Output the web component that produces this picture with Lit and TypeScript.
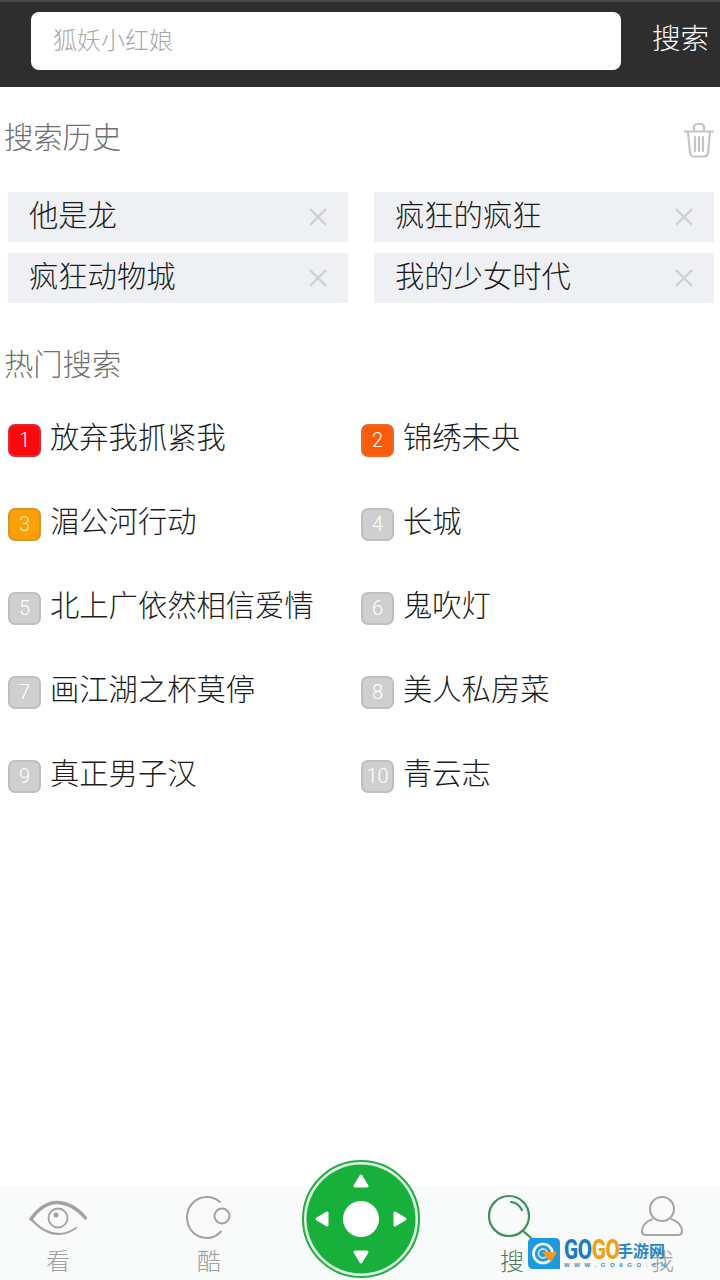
import { LitElement, html, css, svg } from "lit";
import { customElement } from "lit/decorators.js";

const history = ["他是龙", "疯狂的疯狂", "疯狂动物城", "我的少女时代"];
const hot = ["放弃我抓紧我", "锦绣未央", "湄公河行动", "长城", "北上广依然相信爱情", "鬼吹灯", "画江湖之杯莫停", "美人私房菜", "真正男子汉", "青云志"];

@customElement("app-root")
export class AppRoot extends LitElement {
  static styles = css`
    :host { display: block; width: 720px; height: 1280px; position: relative; overflow: hidden; background: #fff;
      font-family: "Noto Sans CJK SC", "Liberation Sans", sans-serif; color: #1c1c1c; font-weight: 300; }
    .top { height: 87px; box-sizing: border-box; background: #2e2e2e; border-top: 2px solid #4a4a4a; display: flex; align-items: center; padding: 0 0 8px 31px; gap: 31px; }
    .input { flex: none; width: 590px; height: 58px; background: #fff; border-radius: 8px; box-sizing: border-box; padding: 0 0 4px 22px; display: flex; align-items: center; font-size: 24px; color: #a8a8a8; }
    .go { font-size: 28.5px; color: #fff; line-height: 1; padding-bottom: 7px; white-space: nowrap; }
    .head { display: flex; justify-content: space-between; align-items: center; padding: 0 6px 0 4px; height: 44px; font-size: 29.3px; color: #707070; line-height: 40px; }
    .head span { padding-bottom: 4px; }
    .head svg { margin-top: 6px; }
    .h1 { margin-top: 28px; }
    .chips { display: grid; grid-template-columns: 340px 340px; column-gap: 26px; row-gap: 11px; padding-left: 8px; margin-top: 33px; }
    .chip { height: 50px; background: #eff0f4; display: flex; align-items: center; justify-content: space-between; padding: 0 20px 0 21px; font-size: 29.3px; line-height: 1; }
    .chip span { padding-bottom: 7px; }
    .h2 { margin-top: 39px; }
    .list { display: grid; grid-template-columns: 353px 353px; grid-auto-rows: 84px; padding-left: 8px; margin-top: 37px; }
    .item { display: flex; align-items: center; gap: 9px; height: 34px; font-size: 29.3px; line-height: 1; white-space: nowrap; }
    .item span { padding-bottom: 8px; }
    .badge { flex: none; width: 33px; height: 33px; box-sizing: border-box; border-radius: 7px; background: #cfcfcf; border: 2px solid #bfbfbf; color: #fff; font: 300 20px/29px "Roboto", "Liberation Sans", sans-serif; text-align: center; }
    .b1 { background: #f70a0e; border-color: #dc2a30; }
    .b2 { background: #fb5a0a; border-color: #e46a30; }
    .b3 { background: #fc9f08; border-color: #d8952e; color: #ffe9a8; }
    .nav { position: absolute; left: 0; right: 0; bottom: 0; height: 94px; background: #f8fbfa; display: grid; grid-template-columns: 116px 186px 118px 184px 116px; }
    .tab { display: flex; flex-direction: column; align-items: center; font-size: 24px; line-height: 30px; color: #a0a0a0; padding-top: 7px; box-sizing: border-box; }
    .tab svg { display: block; height: 50px; }
    .tab span { margin-top: 2px; }
    .tab.on { color: #4c7a5c; }
    .tab.on svg { margin-left: 10px; }
    .joy { position: absolute; left: 302px; top: 1160px; width: 118px; height: 118px; }
    .mark { position: absolute; left: 528px; top: 1238px; display: flex; gap: 4px; }
    .mark > svg { display: block; }
    .brand { display: flex; flex-direction: column; }
    .name { display: flex; height: 24px; align-items: center; white-space: nowrap; }
    .gogo { width: 53px; font: 800 28px/24px "Roboto", sans-serif; color: #1f79c4; display: inline-block; transform: scaleX(.74); transform-origin: left center; letter-spacing: -.5px; }
    .gogo i { font-style: normal; color: #f0a012; }
    .cn { font: 700 16px/24px "Noto Sans CJK SC", sans-serif; color: #2c86cc; }
    .brand small { font: 700 6px/7px "Liberation Sans", sans-serif; letter-spacing: 4.6px; color: #3f86c0; white-space: nowrap; }
  `;

  private close() {
    return html`<svg width="20" height="20" viewBox="0 0 20 20" fill="none" stroke="#cfd0d2" stroke-width="2.4"><path d="M2 2 18 18M18 2 2 18"/></svg>`;
  }

  render() {
    return html`
      <div class="top"><div class="input">狐妖小红娘</div><div class="go">搜索</div></div>
      <div class="head h1"><span>搜索历史</span>
        <svg width="30" height="36" viewBox="0 0 30 36" fill="none" stroke="#c4c6c6" stroke-width="2.2" stroke-linecap="round" stroke-linejoin="round">
          <path d="M1 9.500H29M10 9V5.500C10 3 11.500 2 13.500 2H16.500C18.500 2 20 3 20 5.500V9"/>
          <path d="M4 10 6 31C6.200 33.500 7.500 34.500 10 34.500H20C22.500 34.500 23.800 33.500 24 31L26 10"/>
          <path d="M11 15V29M15 15V29M19 15V29"/>
        </svg>
      </div>
      <div class="chips">${history.map((t) => html`<div class="chip"><span>${t}</span>${this.close()}</div>`)}</div>
      <div class="head h2"><span>热门搜索</span></div>
      <div class="list">${hot.map((t, i) => html`<div class="item"><div class="badge ${i < 3 ? `b${i + 1}` : ""}">${i + 1}</div><span>${t}</span></div>`)}</div>

      <div class="nav">
        <div class="tab"><svg width="58" height="50" viewBox="0 0 58 50" fill="none" stroke="#a2a2a2">
          <path d="M2 26C10 15 19 9 29 9.500C39 10 49 16 56.500 25" stroke-width="3.500" stroke-linecap="round"/>
          <path d="M2 26C10 35 19 41 30 41C36 41 41 39 47 35" stroke-width="2" stroke-linecap="round"/>
          <circle cx="29" cy="25" r="9.500" stroke-width="1.800"/><circle cx="27" cy="22" r="2.500" fill="#a2a2a2" stroke="none"/>
        </svg><span>看</span></div>
        <div class="tab"><svg width="48" height="50" viewBox="0 0 48 50" fill="none" stroke="#a2a2a2" stroke-width="2">
          <path d="M35 9C31 5.500 27 4 22 4C10.500 4 2 13 2 24.500C2 36 10.500 45 22 45C27 45 32 43 36 38.500" stroke-linecap="round"/>
          <circle cx="37" cy="23" r="7.500"/>
        </svg><span>酷</span></div>
        <div></div>
        <div class="tab on"><svg width="60" height="50" viewBox="0 0 60 50" fill="none" stroke="#3f8f5c" stroke-width="2.200" stroke-linecap="round">
          <circle cx="22" cy="23" r="20"/><path d="M24 9C29 9.500 33 13 35 17M36 38 50 50"/>
        </svg><span>搜</span></div>
        <div class="tab"><svg width="44" height="50" viewBox="0 0 44 50" fill="none" stroke="#a8a8a8" stroke-width="2.200">
          <circle cx="22" cy="16" r="12"/><path d="M13 26C6 28 2 33 2 38C2 41 3 42 6 42H38C41 42 42 41 42 38C42 33 38 28 31 26"/>
        </svg><span>我</span></div>
      </div>

      <svg class="joy" viewBox="0 0 118 118">
        <circle cx="59" cy="59" r="58" fill="#dff6e4" stroke="#1fae42" stroke-width="2"/>
        <circle cx="59" cy="59" r="54.500" fill="#17b03a"/>
        <circle cx="59" cy="59" r="18" fill="#fff"/>
        ${svg`<g fill="#fff" stroke="#fff" stroke-width="3" stroke-linejoin="round">
          <path d="M59 16 65 26H53Z"/><path d="M59 102 65 92H53Z"/><path d="M15 59 25 53V65Z"/><path d="M103 59 93 53V65Z"/>
        </g>`}
      </svg>

      <div class="mark">
        <svg width="32" height="31" viewBox="0 0 32 31">
          <path d="M0 5Q0 0 5 0H27Q32 0 32 5V31H5Q0 31 0 26Z" fill="#1f9ae0"/>
          <circle cx="15" cy="15.500" r="9.500" fill="none" stroke="#fff" stroke-width="2.600"/>
          <circle cx="15" cy="15.500" r="4.500" fill="none" stroke="#bfe4f8" stroke-width="1.800"/>
          <path d="M14 14H29L23 24Z" fill="#f29a1c"/>
        </svg>
        <div class="brand">
          <div class="name"><span class="gogo">GO<i>GO</i></span><span class="cn">手游网</span></div>
          <small>WWW.GO9GO.CN</small>
        </div>
      </div>
    `;
  }
}
